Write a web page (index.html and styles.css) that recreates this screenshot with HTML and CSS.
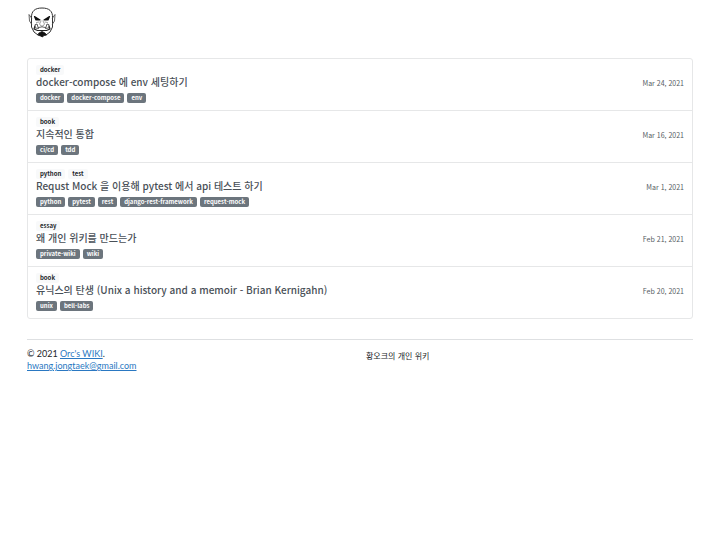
FILE: index.html
```
<!DOCTYPE html>
<html lang="ko">
<head>
  <meta charset="UTF-8" />
  <meta name="viewport" content="width=device-width, initial-scale=1.0" />
  <title>Orc's WIKI</title>
  <link rel="stylesheet" href="styles.css">
</head>
<body>
  <header>
    <a class="logo" href="#" aria-label="Orc's WIKI">
      <svg viewBox="0 0 30 32" fill="none" stroke="#333" stroke-linecap="round" stroke-linejoin="round">
        <path d="M4.500 12C4 5 8 2 15 2S26 5 25.500 12V21L23 26L19 29M4.500 12V21L7 26L11 29" stroke-width="1" />
        <path d="M4.500 12L2 8.500L2.500 15L4.500 18M25.500 12L28 8.500L27.500 15L25.500 18" stroke="#555" stroke-width=".9" />
        <path d="M7.500 10.500L13 14L9 14ZM22.500 10.500L17 14L21 14Z" fill="#111" stroke="#111" stroke-width="1.200" />
        <path d="M9.500 16.500L12 16M20.500 16.500L18 16M14 15L12.500 18L14 20H16L17.500 18L16 15" stroke="#777" stroke-width=".7" />
        <path d="M8 20L7 23L10.500 24.500H19.500L23 23L22 20" stroke="#222" stroke-width="1.200" />
        <path d="M8.500 18.500L10 18L11.500 22.500L8.500 22ZM21.500 18.500L20 18L18.500 22.500L21.500 22Z" fill="#fff" stroke-width=".8" />
        <path d="M11.500 21.500Q15 20 18.500 21.500" stroke-width=".8" />
        <path d="M12 27L15 25.500L18 27L19.500 29L17 29.500L15.500 31L13.500 30L11 29Z" fill="#111" stroke="#111" stroke-width=".8" />
      </svg>
    </a>
  </header>

  <main>
    <ul class="posts">
      <li class="post">
        <div class="post-body">
          <div class="badges"><a class="badge category" href="#">docker</a></div>
          <a class="title" href="#">docker-compose 에 env 세팅하기</a>
          <div class="badges">
            <a class="badge" href="#">docker</a>
            <a class="badge" href="#">docker-compose</a>
            <a class="badge" href="#">env</a>
          </div>
        </div>
        <time datetime="2021-03-24">Mar 24, 2021</time>
      </li>
      <li class="post">
        <div class="post-body">
          <div class="badges"><a class="badge category" href="#">book</a></div>
          <a class="title" href="#">지속적인 통합</a>
          <div class="badges">
            <a class="badge" href="#">ci/cd</a>
            <a class="badge" href="#">tdd</a>
          </div>
        </div>
        <time datetime="2021-03-16">Mar 16, 2021</time>
      </li>
      <li class="post">
        <div class="post-body">
          <div class="badges">
            <a class="badge category" href="#">python</a>
            <a class="badge category" href="#">test</a>
          </div>
          <a class="title" href="#">Requst Mock 을 이용해 pytest 에서 api 테스트 하기</a>
          <div class="badges">
            <a class="badge" href="#">python</a>
            <a class="badge" href="#">pytest</a>
            <a class="badge" href="#">rest</a>
            <a class="badge" href="#">django-rest-framework</a>
            <a class="badge" href="#">request-mock</a>
          </div>
        </div>
        <time datetime="2021-03-01">Mar 1, 2021</time>
      </li>
      <li class="post">
        <div class="post-body">
          <div class="badges"><a class="badge category" href="#">essay</a></div>
          <a class="title" href="#">왜 개인 위키를 만드는가</a>
          <div class="badges">
            <a class="badge" href="#">private-wiki</a>
            <a class="badge" href="#">wiki</a>
          </div>
        </div>
        <time datetime="2021-02-21">Feb 21, 2021</time>
      </li>
      <li class="post">
        <div class="post-body">
          <div class="badges"><a class="badge category" href="#">book</a></div>
          <a class="title" href="#">유닉스의 탄생 (Unix a history and a memoir - Brian Kernigahn)</a>
          <div class="badges">
            <a class="badge" href="#">unix</a>
            <a class="badge" href="#">bell-labs</a>
          </div>
        </div>
        <time datetime="2021-02-20">Feb 20, 2021</time>
      </li>
    </ul>
  </main>

  <footer>
    <div class="copyright">
      © 2021 <a href="#">Orc's WIKI</a>.<br>
      <a href="mailto:hwang.jongtaek@gmail.com">hwang.jongtaek@gmail.com</a>
    </div>
    <div class="about">황오크의 개인 위키</div>
  </footer>
</body>
</html>
```

FILE: styles.css
```
* {
  box-sizing: border-box;
}
body {
  margin: 0;
  padding: 6px 27px;
  font-family: "Noto Sans CJK KR", sans-serif;
  font-size: 8px;
  line-height: 12px;
  color: #212529;
  background: #fff;
}
header {
  margin-bottom: 20px;
}
.logo {
  display: block;
  width: 30px;
  height: 32px;
}
.logo svg {
  display: block;
  width: 100%;
}
.posts {
  list-style: none;
  margin: 0;
  padding: 0;
  border: 1px solid #e6e7e8;
  border-radius: 3px;
}
.post {
  display: flex;
  align-items: center;
  justify-content: space-between;
  padding: 6px 8px 7px;
}
.post + .post {
  border-top: 1px solid #e6e7e8;
}
.badges {
  display: flex;
  gap: 3px;
}
.badge {
  padding: 0 4px;
  border-radius: 2px;
  font-size: 6px;
  line-height: 10px;
  font-weight: 700;
  color: #fff;
  background: #6c757d;
  text-decoration: none;
}
.category {
  color: #212529;
  background: #f8f9fa;
}
.title {
  display: block;
  margin-bottom: 4px;
  font-size: 10px;
  line-height: 14px;
  font-weight: 500;
  color: #495057;
  text-decoration: none;
}
time {
  padding-bottom: 3px;
  font-size: 7px;
  color: #555c63;
}
footer {
  display: grid;
  grid-template-columns: 1fr 1fr;
  gap: 12px;
  margin-top: 20px;
  padding-top: 8px;
  border-top: 1px solid #dee0e2;
}
.copyright {
  font-family: Lato, "Noto Sans CJK KR", sans-serif;
  font-size: 9px;
}
.copyright a {
  color: #2a78c2;
}
.about {
  padding-top: 2px;
}
```
